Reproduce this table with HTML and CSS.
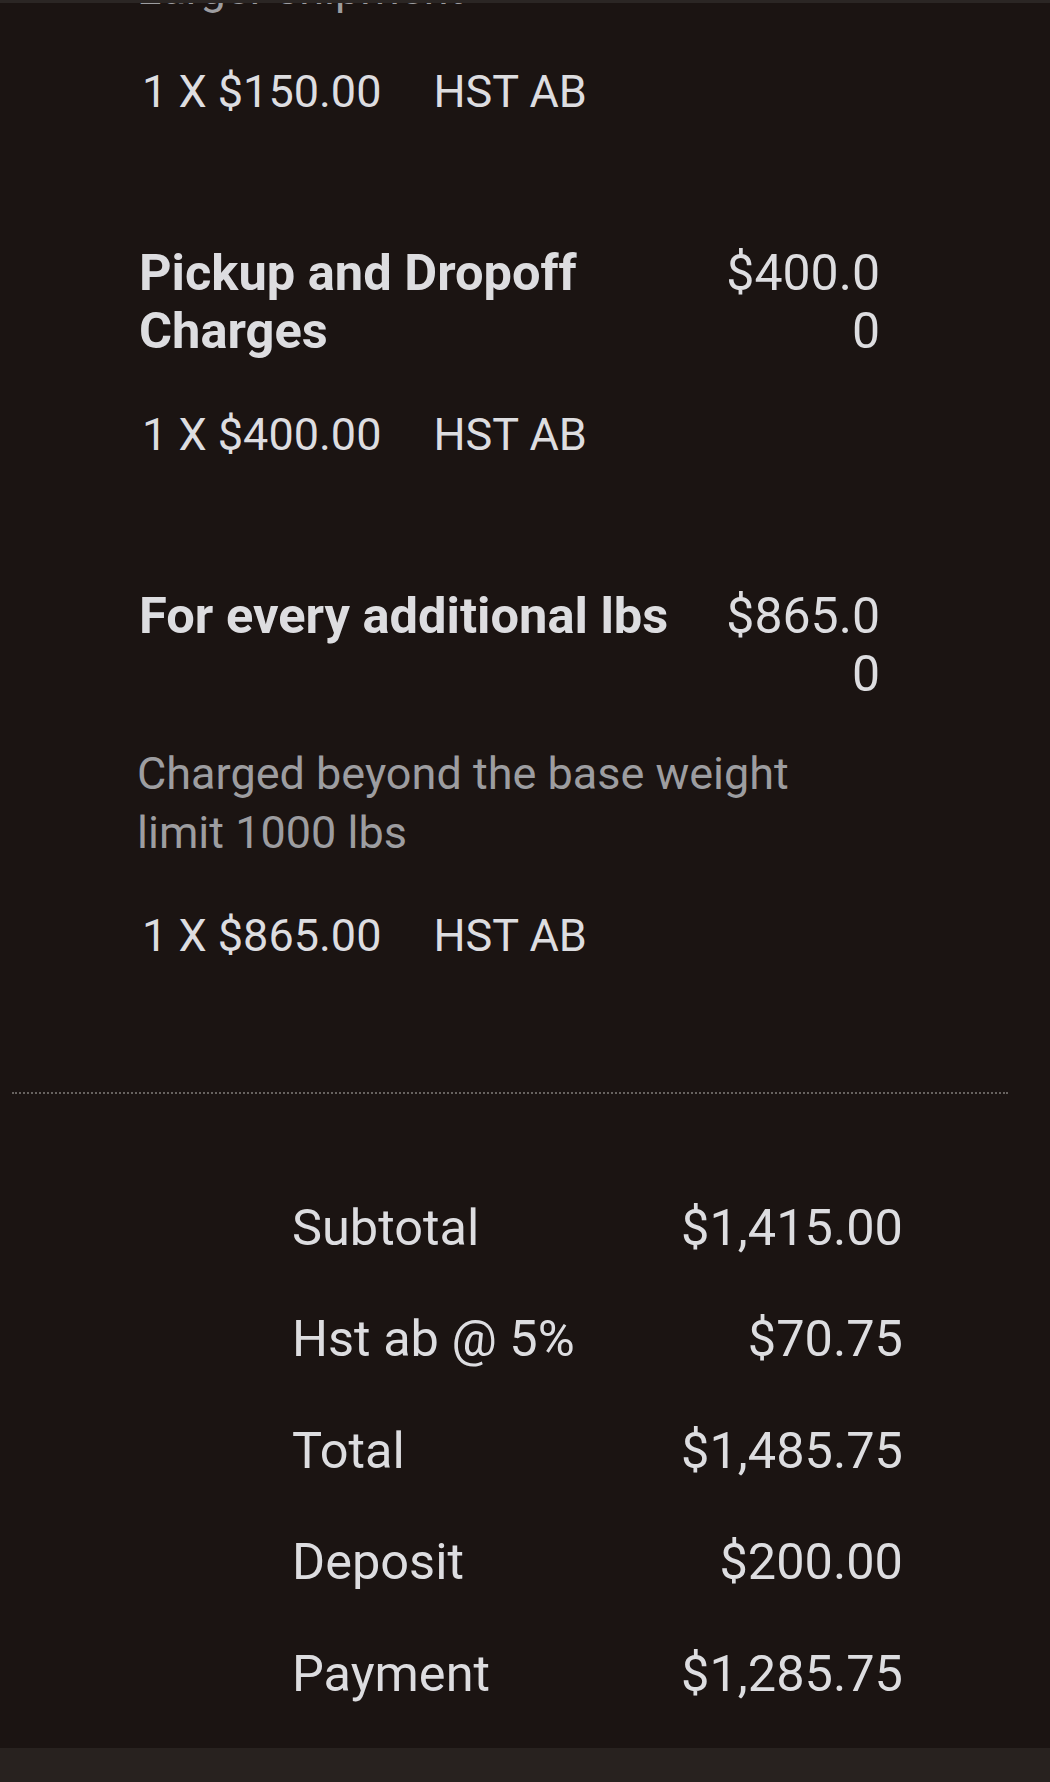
FILE: index.html
```html
<!DOCTYPE html>
<html lang="en">
<head>
  <meta charset="UTF-8" />
  <meta name="viewport" content="width=device-width, initial-scale=1.0" />
  <title>Invoice</title>
  <link rel="stylesheet" href="styles.css">
</head>
<body>
  <div class="topbar"></div>

  <div class="viewport">
    <div class="items">
      <div class="item">
        <p class="desc">Larger shipment</p>
        <div class="detail"><span>1 X $150.00</span><span>HST AB</span></div>
      </div>

      <div class="item">
        <div class="item-head">
          <h3 class="item-title">Pickup and Dropoff Charges</h3>
          <span class="item-price">$400.00</span>
        </div>
        <div class="detail"><span>1 X $400.00</span><span>HST AB</span></div>
      </div>

      <div class="item">
        <div class="item-head">
          <h3 class="item-title">For every additional lbs</h3>
          <span class="item-price">$865.00</span>
        </div>
        <p class="desc">Charged beyond the base weight limit 1000 lbs</p>
        <div class="detail"><span>1 X $865.00</span><span>HST AB</span></div>
      </div>
    </div>

    <hr class="divider">

    <div class="summary">
      <span>Subtotal</span><span class="amount">$1,415.00</span>
      <span>Hst ab @ 5%</span><span class="amount">$70.75</span>
      <span>Total</span><span class="amount">$1,485.75</span>
      <span>Deposit</span><span class="amount">$200.00</span>
      <span>Payment</span><span class="amount">$1,285.75</span>
    </div>
  </div>

  <div class="bottombar"></div>
</body>
</html>
```

FILE: styles.css
```css
body {
  margin: 0;
  background: #1b1412;
  color: #dddde0;
  font-family: Roboto, "Noto Sans", sans-serif;
}
.topbar {
  height: 3px;
  background: #2b2624;
}
.viewport {
  height: 1745px;
  overflow: hidden;
}
.items {
  /* list is scrolled: the first line sits under the top bar */
  margin-top: -44px;
  padding: 0 170px 0 139px;
}
.item + .item {
  margin-top: 123px;
}
.item-head {
  display: flex;
  gap: 20px;
  font-size: 50px;
  line-height: 58px;
}
.item-title {
  flex: 1;
  margin: 0;
  font-size: 50.6px;
  font-weight: 700;
}
.item-price {
  width: 162px;
  text-align: right;
  word-break: break-all;
}
.desc {
  margin: 41px 0 0 -2px;
  font-size: 45px;
  line-height: 59px;
  color: #9d9da0;
}
.item > .desc:first-child {
  margin-top: 0;
}
.detail {
  display: flex;
  gap: 52px;
  margin: 44px 0 0 3px;
  font-size: 45px;
  line-height: 59px;
}
.item-head + .detail {
  margin-top: 45px;
}
.divider {
  margin: 127px 42px 0 12px;
  border: 0;
  border-top: 2px dotted #67625f;
}
.summary {
  display: grid;
  grid-template-columns: 1fr auto;
  row-gap: 52.4px;
  width: 611px;
  margin: 104px 0 0 292px;
  font-size: 50.5px;
  line-height: 59px;
}
.amount {
  text-align: right;
}
.bottombar {
  height: 34px;
  background: #28221f;
}
```
